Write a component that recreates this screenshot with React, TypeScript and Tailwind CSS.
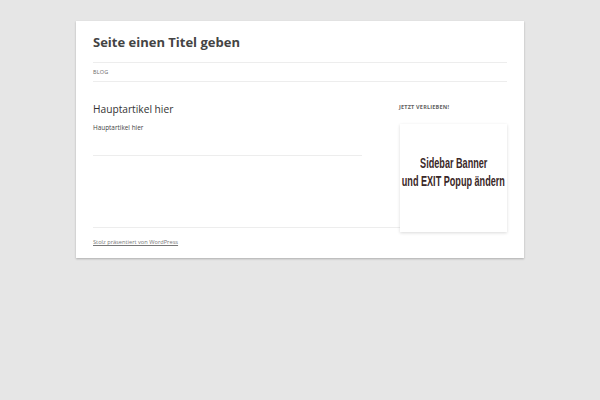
import React from "react";

export default function App() {
  return (
    <div className="w-[600px] h-[400px] bg-[#e6e6e6] pt-[21px]" style={{ fontFamily: '"Open Sans", "DejaVu Sans", sans-serif' }}>
      <div className="mx-auto w-[448px] h-[237px] bg-white px-[17px] shadow-[0_1px_2px_rgba(0,0,0,0.25)]">
        <div className="pt-[13px] h-[41px]">
          <h1 className="text-[13px] leading-[16px] font-bold text-[#444]">Seite einen Titel geben</h1>
        </div>
        <div className="border-t border-b border-[#ededed] h-[20px] flex items-center">
          <span className="text-[5.5px] text-[#6a6a6a] uppercase tracking-[0.2px]">Blog</span>
        </div>
        <div className="flex h-[145px]">
          <div className="w-[269px] pt-[20px]">
            <h2 className="text-[10.2px] leading-[14px] text-[#333]">Hauptartikel hier</h2>
            <p className="mt-[7px] text-[6.4px] leading-[10px] text-[#444]">Hauptartikel hier</p>
            <div className="mt-[22px] border-t border-[#ededed]"></div>
          </div>
          <div className="ml-auto w-[108px] pt-[22px] flex flex-col">
            <div className="text-[5.5px] font-bold text-[#636363] uppercase leading-[6px] tracking-[0.2px]">Jetzt verlieben!</div>
            <div className="ml-[1px] mt-[14px] h-[108px] shrink-0 bg-white shadow-[0_1px_3px_rgba(0,0,0,0.15)] flex flex-col items-center justify-center">
              <div
                className="flex flex-col items-center text-[#3a2828] text-[14px] leading-[18px] font-bold -mt-[12px]"
                style={{ fontFamily: '"Liberation Sans", sans-serif' }}
              >
                <div className="whitespace-nowrap scale-x-[0.65]">Sidebar Banner</div>
                <div className="whitespace-nowrap scale-x-[0.65]">und EXIT Popup ändern</div>
              </div>
            </div>
          </div>
        </div>
        <div className="border-t border-[#ededed] pt-[10px]">
          <a href="#" className="block text-[5.7px] leading-[8px] text-[#777] underline">Stolz präsentiert von WordPress</a>
        </div>
      </div>
    </div>
  );
}
